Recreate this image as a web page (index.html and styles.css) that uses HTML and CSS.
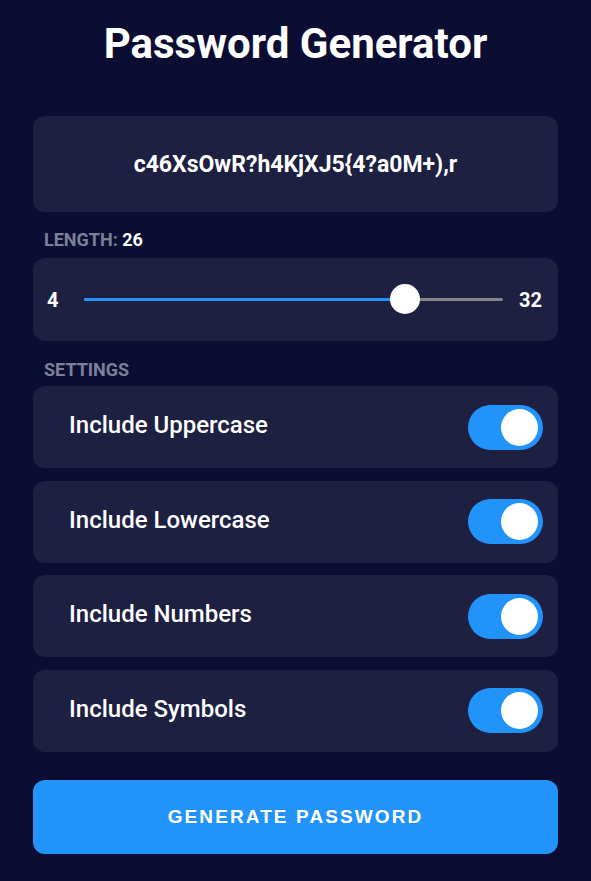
FILE: index.html
```html
<!DOCTYPE html>
<html lang="en">
<head>
<meta charset="utf-8">
<title>Password Generator</title>
<link rel="stylesheet" href="styles.css">
</head>
<body>
<main class="app">
  <h1 class="title">Password Generator</h1>
  <div class="result"><span class="result-text">c46XsOwR?h4KjXJ5{4?a0M+),r</span></div>

  <div class="label">LENGTH: <span class="label-value">26</span></div>
  <div class="card slider-card">
    <span class="bound bound-min">4</span>
    <div class="track">
      <div class="track-fill" style="width: 321px"></div>
      <div class="thumb" style="left: 306px"></div>
    </div>
    <span class="bound bound-max">32</span>
  </div>

  <div class="label settings-label">SETTINGS</div>
  <div class="settings">
    <div class="card setting"><span class="setting-name">Include Uppercase</span><span class="toggle"><span class="knob"></span></span></div>
    <div class="card setting"><span class="setting-name">Include Lowercase</span><span class="toggle"><span class="knob"></span></span></div>
    <div class="card setting"><span class="setting-name">Include Numbers</span><span class="toggle"><span class="knob"></span></span></div>
    <div class="card setting"><span class="setting-name">Include Symbols</span><span class="toggle"><span class="knob"></span></span></div>
  </div>

  <button class="generate">GENERATE PASSWORD</button>
</main>
</body>
</html>
```

FILE: styles.css
```css
* { box-sizing: border-box; }
html, body { margin: 0; padding: 0; }
body {
  background: #0b0e32;
  color: #ffffff;
  font-family: Roboto, "Noto Sans", sans-serif;
}
.app {
  width: 525px;
  margin: 0 auto;
  padding-top: 17px;
}
.title {
  margin: 0;
  height: 99px;
  text-align: center;
  font-size: 42px;
  font-weight: 700;
  line-height: 54px;
}
.result {
  height: 96px;
  background: #1d2041;
  border-radius: 12px;
  display: flex;
  align-items: center;
  justify-content: center;
}
.result-text {
  font-size: 23px;
  font-weight: 700;
}
.label {
  margin: 0 0 0 11px;
  height: 46px;
  padding-top: 17px;
  font-size: 18px;
  font-weight: 700;
  color: #7d8099;
  line-height: 22px;
}
.label-value { color: #ffffff; }
.card {
  background: #1d2041;
  border-radius: 12px;
}
.slider-card {
  height: 83px;
  display: flex;
  align-items: center;
  padding: 0 16px 0 14px;
}
.bound {
  font-size: 20px;
  font-weight: 700;
}
.bound-min { width: 12px; margin-right: 25px; }
.bound-max { margin-left: 16px; }
.track {
  position: relative;
  flex: 1;
  height: 3px;
  background: #858585;
  border-radius: 2px;
}
.track-fill {
  height: 3px;
  background: #2393fc;
  border-radius: 2px;
}
.thumb {
  position: absolute;
  top: -14px;
  width: 30px;
  height: 30px;
  border-radius: 50%;
  background: #ffffff;
}
.settings-label {
  height: 45px;
  padding-top: 18px;
}
.settings {
  display: flex;
  flex-direction: column;
  gap: 12.5px;
}
.setting {
  height: 82px;
  display: flex;
  align-items: center;
  justify-content: space-between;
  padding: 0 15px 4px 36px;
}
.setting-name {
  font-size: 24px;
  font-weight: 500;
}
.toggle {
  margin-top: 4px;
  width: 75px;
  height: 45px;
  border-radius: 23px;
  background: #2393fc;
  display: flex;
  align-items: center;
  justify-content: flex-end;
  padding-right: 5px;
}
.knob {
  width: 37px;
  height: 37px;
  border-radius: 50%;
  background: #ffffff;
}
.generate {
  display: block;
  width: 100%;
  height: 74px;
  margin-top: 28px;
  border: 0;
  border-radius: 12px;
  background: #2393fc;
  color: #ffffff;
  font-family: "Liberation Sans", Arial, sans-serif;
  font-size: 19px;
  font-weight: 700;
  letter-spacing: 2.1px;
}
```
